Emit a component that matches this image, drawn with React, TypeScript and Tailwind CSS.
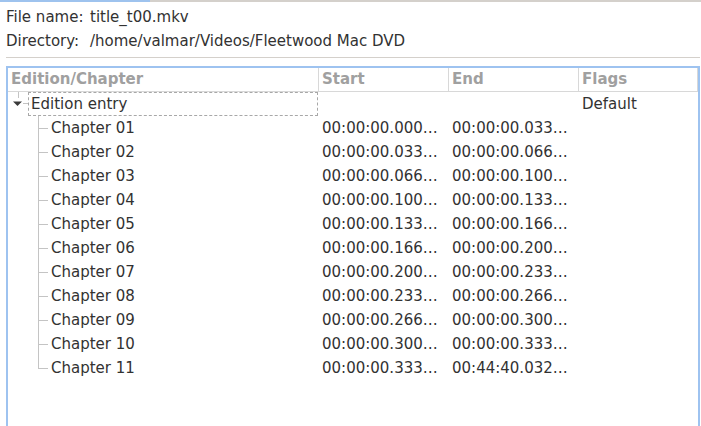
import React from "react";

type Chapter = { name: string; start: string; end: string };

const chapters: Chapter[] = [
  { name: "Chapter 01", start: "00:00:00.000…", end: "00:00:00.033…" },
  { name: "Chapter 02", start: "00:00:00.033…", end: "00:00:00.066…" },
  { name: "Chapter 03", start: "00:00:00.066…", end: "00:00:00.100…" },
  { name: "Chapter 04", start: "00:00:00.100…", end: "00:00:00.133…" },
  { name: "Chapter 05", start: "00:00:00.133…", end: "00:00:00.166…" },
  { name: "Chapter 06", start: "00:00:00.166…", end: "00:00:00.200…" },
  { name: "Chapter 07", start: "00:00:00.200…", end: "00:00:00.233…" },
  { name: "Chapter 08", start: "00:00:00.233…", end: "00:00:00.266…" },
  { name: "Chapter 09", start: "00:00:00.266…", end: "00:00:00.300…" },
  { name: "Chapter 10", start: "00:00:00.300…", end: "00:00:00.333…" },
  { name: "Chapter 11", start: "00:00:00.333…", end: "00:44:40.032…" },
];

function ChapterRow({ chapter, last }: { chapter: Chapter; last: boolean }) {
  return (
    <div className="flex h-6 items-center">
      <div className="flex h-6 w-[310px] items-center">
        <svg width="43" height="24" className="shrink-0">
          <line x1="30.5" y1="0" x2="30.5" y2={last ? 12.5 : 24} stroke="#c4c4c4" />
          <line x1="30" y1="12.5" x2="40" y2="12.5" stroke="#c4c4c4" />
        </svg>
        <span>{chapter.name}</span>
      </div>
      <div className="w-[130px] pl-[4px]">{chapter.start}</div>
      <div className="w-[130px] pl-[4px]">{chapter.end}</div>
      <div className="flex-1 pl-[4px]"></div>
    </div>
  );
}

export default function App() {
  return (
    <div
      className="flex h-[426px] w-[701px] flex-col overflow-hidden bg-white text-[15px] text-[#323232]"
      style={{ fontFamily: '"DejaVu Sans", sans-serif' }}
    >
      <div className="flex h-[2px]">
        <div className="w-[150px] bg-[#9ec3ee]"></div>
        <div className="flex-1 bg-[#d4d0cb]"></div>
      </div>

      <div className="pt-[3px] pl-[6px]">
        <div className="flex h-6 items-center">
          <span className="w-[84px]">File name:</span>
          <span>title_t00.mkv</span>
        </div>
        <div className="flex h-6 items-center">
          <span className="w-[84px]">Directory:</span>
          <span>/home/valmar/Videos/Fleetwood Mac DVD</span>
        </div>
      </div>

      <div className="mt-[4px] ml-[6px] mr-[1px] h-px bg-[#d4d0cb]"></div>

      <div className="mt-[8px] ml-[6px] mr-[1px] flex-1 border-2 border-b-0 border-[#9ec3f0]">
        <div className="flex h-6 items-center border-r border-b border-[#d8d8d8] font-bold text-[#a0a0a0]">
          <div className="w-[310px] pl-[3px]">Edition/Chapter</div>
          <div className="flex h-full w-[130px] items-center border-l border-[#d8d8d8] pl-[3px]">Start</div>
          <div className="flex h-full w-[130px] items-center border-l border-[#d8d8d8] pl-[3px]">End</div>
          <div className="flex h-full flex-1 items-center border-l border-[#d8d8d8] pl-[3px]">Flags</div>
        </div>

        <div className="flex h-6 items-center">
          <div className="flex h-6 w-[310px] items-center">
            <svg width="20" height="24" className="shrink-0">
              <line x1="10.5" y1="0" x2="10.5" y2="6" stroke="#c4c4c4" />
              <polygon points="5,9.5 14,9.5 9.5,14" fill="#3a3a3a" />
              <line x1="15" y1="11.5" x2="20" y2="11.5" stroke="#c4c4c4" />
            </svg>
            <div className="flex h-6 flex-1 items-center border border-dashed border-[#a8a8a8] pl-[2px]">
              Edition entry
            </div>
          </div>
          <div className="w-[130px]"></div>
          <div className="w-[130px]"></div>
          <div className="flex-1 pl-[4px]">Default</div>
        </div>

        {chapters.map((c, i) => (
          <ChapterRow key={c.name} chapter={c} last={i === chapters.length - 1} />
        ))}
      </div>
    </div>
  );
}
